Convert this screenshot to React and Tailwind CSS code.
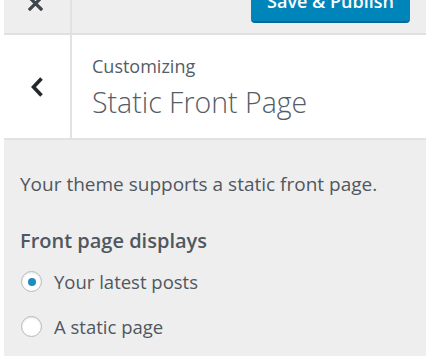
import React from 'react'

function App() {
    return (
        <div className="w-[427px] h-[360px] bg-white pl-[4px] pr-[1px] pb-[4px] font-['Open_Sans',sans-serif] overflow-hidden">
            <div className="h-full flex flex-col bg-[#eeeeee]">
                {/* Top bar */}
                <div className="flex h-[35px] shrink-0 border-b-2 border-[#e0e0e0]">
                    <div className="w-[68px] border-r-2 border-[#e2e2e2] flex justify-center">
                        <svg width="15" height="15" viewBox="0 0 15 15" className="mt-[-4px] mr-[4px]">
                            <path d="M2 2 L13 13 M13 2 L2 13" stroke="#40464d" strokeWidth="3.2" strokeLinecap="square" />
                        </svg>
                    </div>
                    <div className="flex-1 flex justify-end pr-[16px]">
                        <button className="h-[40px] mt-[-17px] px-[16px] rounded-[4px] bg-[#0085ba] border-b-2 border-[#006a95] text-white text-[18px] font-semibold leading-none pt-[9px] flex items-start">
                            Save &amp; Publish
                        </button>
                    </div>
                </div>

                {/* Header */}
                <div className="flex h-[105px] shrink-0 bg-white border-b-2 border-[#e2e2e2]">
                    <div className="w-[68px] border-r-2 border-[#e2e2e2] flex items-center justify-center">
                        <svg width="14" height="22" viewBox="0 0 14 22">
                            <path d="M11.5 2.5 L3.5 11 L11.5 19.5" fill="none" stroke="#23282d" strokeWidth="3.6" />
                        </svg>
                    </div>
                    <div className="pl-[20px] pt-[20px]">
                        <p className="text-[18px] leading-[22px] text-[#555d66]">Customizing</p>
                        <h1 className="text-[28.5px] leading-[34px] font-light text-[#555d66] mt-[8px]">Static Front Page</h1>
                    </div>
                </div>

                {/* Body */}
                <div className="px-[16px] pt-[32px]">
                    <p className="text-[19px] leading-[24px] text-[#50575e]">Your theme supports a static front page.</p>
                    <p className="mt-[33px] text-[20px] leading-[24px] font-semibold text-[#50575e]">Front page displays</p>
                    <div className="mt-[6px]">
                        <label className="flex items-center h-[45px] gap-[12px] text-[18.5px] text-[#50575e]">
                            <span className="w-[21px] h-[21px] ml-[1px] rounded-full bg-white border border-[#b4b9be] shadow-[inset_0_1px_2px_rgba(0,0,0,0.1)] flex items-center justify-center">
                                <span className="w-[8px] h-[8px] rounded-full bg-[#1e8cbe]" />
                            </span>
                            Your latest posts
                        </label>
                        <label className="flex items-center h-[45px] gap-[12px] text-[18.5px] text-[#50575e]">
                            <span className="w-[21px] h-[21px] ml-[1px] rounded-full bg-white border border-[#b4b9be] shadow-[inset_0_1px_2px_rgba(0,0,0,0.1)]" />
                            A static page
                        </label>
                    </div>
                </div>
            </div>
        </div>
    )
}

export default App
